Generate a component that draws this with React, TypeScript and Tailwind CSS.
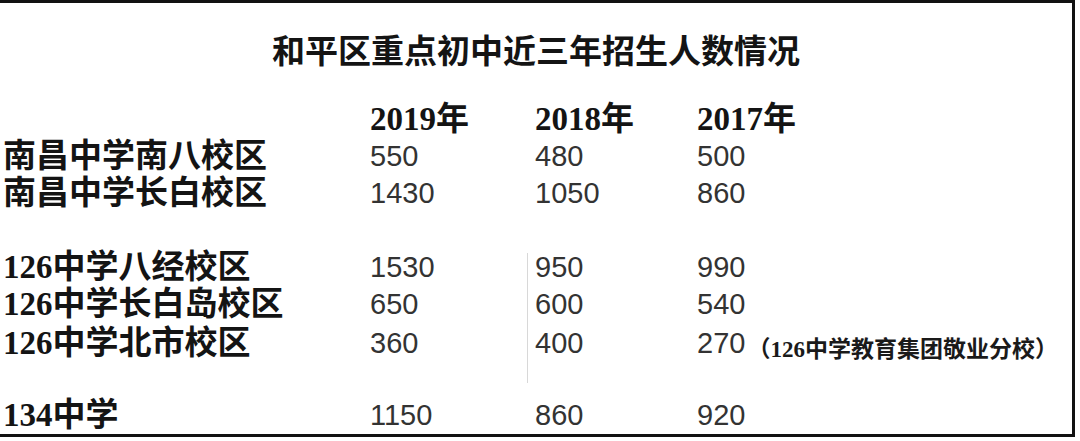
const years = ['2019年', '2018年', '2017年']

type Row = { name: string; values: string[]; note?: string } | null

const rows: Row[] = [
  { name: '南昌中学南八校区', values: ['550', '480', '500'] },
  { name: '南昌中学长白校区', values: ['1430', '1050', '860'] },
  null,
  { name: '126中学八经校区', values: ['1530', '950', '990'] },
  { name: '126中学长白岛校区', values: ['650', '600', '540'] },
  { name: '126中学北市校区', values: ['360', '400', '270'], note: '（126中学教育集团敬业分校）' },
  null,
  { name: '134中学', values: ['1150', '860', '920'] },
]

const cols = 'grid grid-cols-[367px_165px_162px_1fr]'

export default function App() {
  return (
    <div className="w-[1080px] h-[441px] bg-white overflow-hidden">
      <div className="relative w-[1075px] h-[437px] border-t-[3px] border-r-[3px] border-b-[3px] border-[#111] overflow-hidden bg-white">
        {/* faint scan line between the 2019 and 2018 columns */}
        <div className="absolute left-[527px] top-[250px] w-px h-[130px] bg-[#d8d8d8]" />

        <div className="h-[98px] pt-[29px] text-center">
          <h1 className="text-[33px] leading-[40px] font-bold text-[#141414] font-['Liberation_Serif','Noto_Sans_CJK_SC',serif]">
            和平区重点初中近三年招生人数情况
          </h1>
        </div>

        <div className="pl-[3px]">
          <div className={`${cols} h-[37px] items-center`}>
            <div />
            {years.map((y) => (
              <div
                key={y}
                className="text-[33px] leading-[37px] font-bold text-[#141414] font-['Liberation_Serif','Noto_Sans_CJK_SC',serif]"
              >
                {y}
              </div>
            ))}
          </div>

          {rows.map((r, i) =>
            r ? (
              <div key={i} className={`${cols} h-[37px] items-center`}>
                <div className="text-[33px] leading-[37px] font-bold text-[#141414] whitespace-nowrap font-['Liberation_Serif','Noto_Sans_CJK_SC',serif]">
                  {r.name}
                </div>
                {r.values.map((v, j) => (
                  <div
                    key={j}
                    className="flex items-center whitespace-nowrap text-[29px] leading-[37px] text-[#333] font-['Liberation_Sans',sans-serif]"
                  >
                    {v}
                    {j === 2 && r.note ? (
                      <span className="ml-[2px] mt-[14px] text-[23px] leading-[26px] font-bold text-[#1a1a1a] font-['Liberation_Serif','Noto_Sans_CJK_SC',serif]">
                        {r.note}
                      </span>
                    ) : null}
                  </div>
                ))}
              </div>
            ) : (
              <div key={i} className="h-[37px]" />
            )
          )}
        </div>
      </div>
    </div>
  )
}
